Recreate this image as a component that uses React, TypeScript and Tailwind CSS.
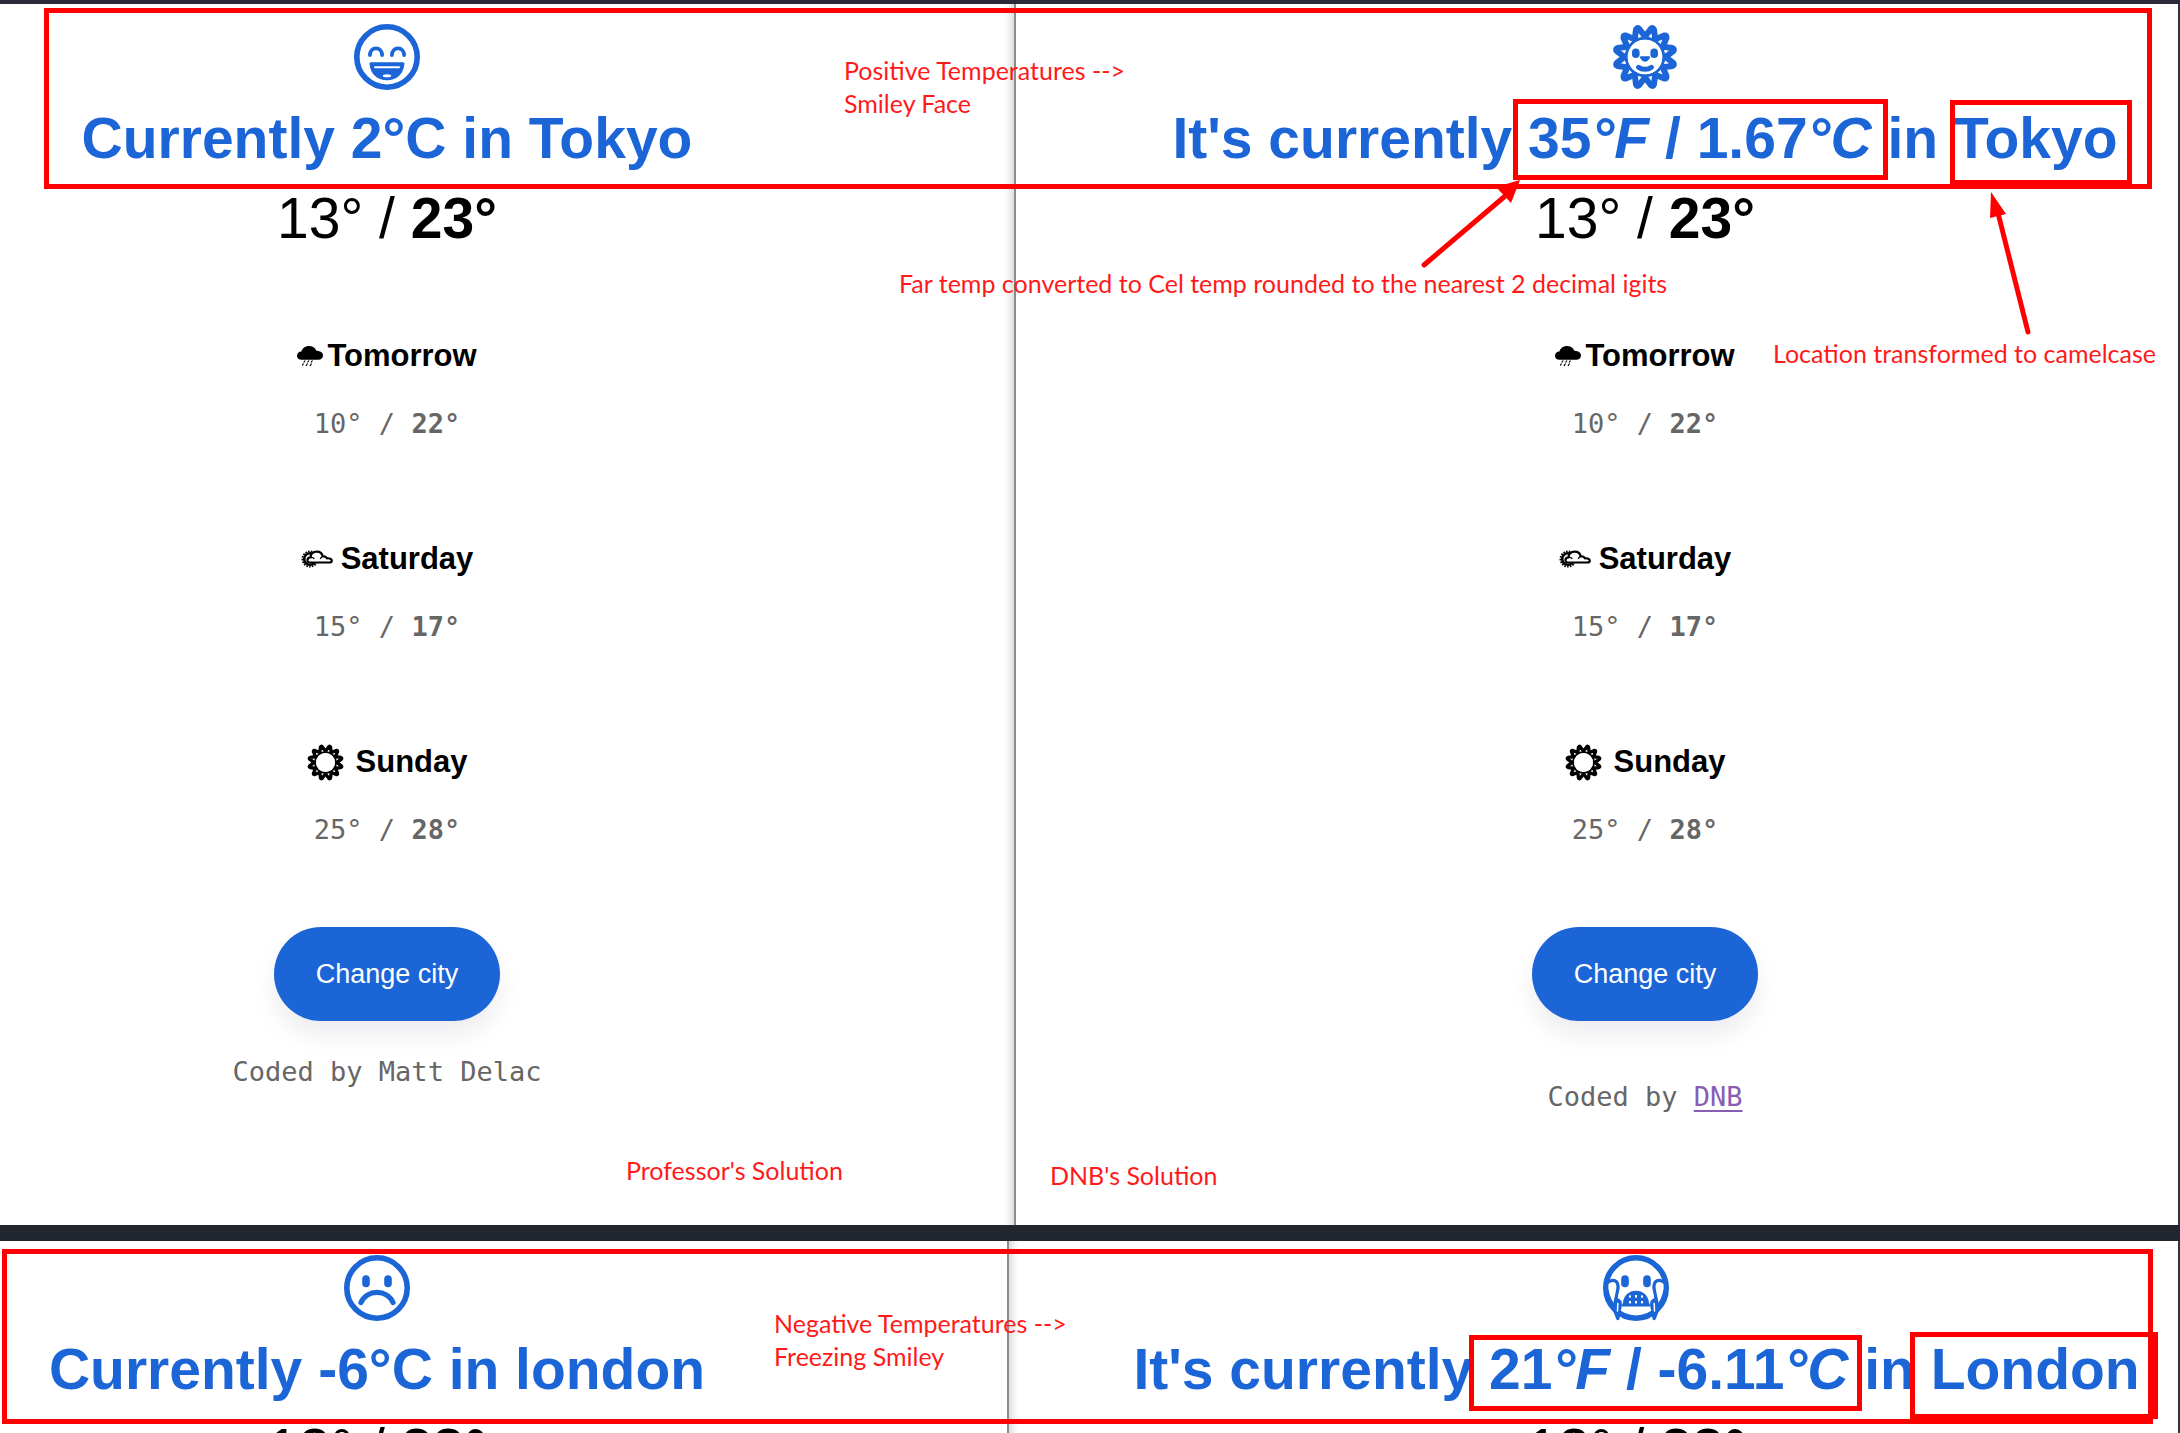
import React from "react";

type Temperatures = { low: number; high: number };

function HappyFace() {
  return (
    <svg viewBox="0 0 66 66" className="size-[66px]" fill="none" stroke="currentColor" strokeLinecap="round">
      <circle cx="33" cy="33" r="30.2" strokeWidth="5.6" />
      <path d="M15.9 31C16 27 18.6 24.4 22 24.4S28 27 28.1 31M37.9 31C38 27 40.6 24.4 44 24.4S50 27 50.1 31" strokeWidth="3.8" />
      <path d="M17 38.3h32c1.2 0 1.5.8 1.4 1.8C49.6 50 43 56.3 33 56.3S16.4 50 15.6 40.1c-.1-1 .2-1.8 1.4-1.8z" fill="currentColor" stroke="none" />
      <path d="M21 43.3h24" stroke="#fff" strokeWidth="2" />
      <ellipse cx="33" cy="51.8" rx="4.2" ry="1.5" fill="#fff" stroke="none" />
    </svg>
  );
}

function Eyes() {
  return (
    <g fill="currentColor" stroke="none">
      <rect x="18.2" y="20.3" width="7.6" height="12" rx="3.8" />
      <rect x="40.2" y="20.3" width="7.6" height="12" rx="3.8" />
    </g>
  );
}

function SadFace() {
  return (
    <svg viewBox="0 0 66 66" className="size-[66px]" fill="none" stroke="currentColor" strokeLinecap="round">
      <circle cx="33" cy="33" r="30.2" strokeWidth="5.6" />
      <Eyes />
      <path d="M17 47.5C23 34 43 34 49 47.5" strokeWidth="5.2" />
    </svg>
  );
}

function Hand() {
  return (
    <>
      <path d="M5.5 27C11 23.500 15.500 26 15 33L12 47 8 50Q5 40 5.500 27Z" fill="#fff" stroke="none" />
      <path d="M4 28C10 23 15.500 25.500 15 33L12.500 46" strokeWidth="3.200" />
      <path d="M3.500 36Q5.500 46 11 52" strokeWidth="4.500" />
      <path d="M11.500 43.500C17 42.500 19.500 46 18.800 50.500L16.500 64Q15 66.500 13.200 64L9 53Z" fill="currentColor" stroke="none" />
      <path d="M14.800 48.500L14.500 56" stroke="#fff" strokeWidth="1.500" />
    </>
  );
}

function FreezingFace() {
  return (
    <svg viewBox="0 0 66 66" className="size-[66px]" fill="none" stroke="currentColor" strokeLinecap="round" strokeLinejoin="round">
      <circle cx="33" cy="33" r="30.2" strokeWidth="5.6" />
      <Eyes />
      <Hand />
      <g transform="matrix(-1 0 0 1 66 0)">
        <Hand />
      </g>
      <path d="M18 51.500L20 48C20.500 40.500 26 35.800 33 35.800S45.500 40.500 46 48L48 51.500Z" fill="currentColor" stroke="none" />
      <g fill="#fff" stroke="none">
        <rect x="26" y="40.400" width="2" height="2.200" />
        <rect x="32" y="40" width="2" height="2.600" />
        <rect x="38" y="40.400" width="2" height="2.200" />
        <rect x="26" y="46" width="2" height="2.400" />
        <rect x="32" y="46" width="2" height="2.400" />
        <rect x="38" y="46" width="2" height="2.400" />
      </g>
    </svg>
  );
}

const PETAL_ANGLES = [15, 45, 75, 105, 135, 165, 195, 225, 255, 285, 315, 345];

function SunPetals() {
  return (
    <g strokeWidth="6" strokeLinejoin="round" strokeLinecap="round">
      {PETAL_ANGLES.map((angle) => (
        <path key={angle} d="M27.8 13L31.400 4.200Q33 2 34.600 4.200L38.200 13" transform={`rotate(${angle} 33 33)`} />
      ))}
    </g>
  );
}

function SunFace() {
  return (
    <svg viewBox="0 0 66 66" className="size-[66px]" fill="none" stroke="currentColor" strokeLinecap="round">
      <SunPetals />
      <circle cx="33" cy="33" r="18.800" strokeWidth="3" />
      <circle cx="33" cy="33" r="17.300" fill="#fff" stroke="none" />
      <rect x="20" y="24.5" width="7.6" height="9.6" rx="3.8" fill="currentColor" stroke="none" />
      <rect x="38.400" y="24.5" width="7.6" height="9.6" rx="3.8" fill="currentColor" stroke="none" />
      <path d="M29 32.3h8c1.2 0 1.3 1 .8 1.8C36.5 36.5 35 37.7 33 37.7S29.5 36.5 28.2 34.1c-.5-.8-.4-1.8.8-1.8z" fill="currentColor" stroke="none" />
      <path d="M26.5 43.3C30 46 36 46 39.5 43.3" strokeWidth="5" />
    </svg>
  );
}

function SunIcon() {
  return (
    <svg viewBox="0 0 66 66" className="size-[37px]" fill="none" stroke="currentColor">
      <SunPetals />
      <circle cx="33" cy="33" r="18.5" strokeWidth="3.5" />
      <circle cx="33" cy="33" r="17" fill="#fff" stroke="none" />
    </svg>
  );
}

function RainIcon() {
  return (
    <svg viewBox="0 0 26 21" className="h-[21px] w-[26px]" fill="currentColor">
      <path d="M4.500 13.800C1.800 13.800 0 12.200 0 9.800S1.800 5.700 4.400 5.600C5.300 2.100 8.400 0 12 0c3.500 0 6.300 1.700 7.300 4.700 3.900.1 6.700 1.900 6.700 4.800 0 2.600-1.800 4.300-4.800 4.300z" />
      <path d="M8.200 14.500l-1.500 2M12 14.500l-1.500 2M15.500 14.500l-1.500 2M6.500 17.500l-1.200 2M10.500 17.500l-1.500 2.500M14.500 17.500l-1.500 2.500" stroke="currentColor" strokeWidth="1.200" />
    </svg>
  );
}

function PartlyCloudyIcon() {
  return (
    <svg viewBox="0 0 32 18" className="h-[18px] w-8" fill="none" stroke="currentColor" strokeLinejoin="round">
      <circle cx="9" cy="9" r="7.600" strokeWidth="1.800" strokeDasharray="1.600 1.200" />
      <circle cx="9" cy="9" r="5.800" strokeWidth="2.600" />
      <path d="M8.500 12.500C5.700 12.500 5.500 7.400 9.600 7.400 9.400 4 12 1.600 15.600 1.600c3.400 0 5.700 2 6 4.900 1.800-.5 3.600.2 4.300 1.800 2.600-.3 4.900.5 4.900 2.400 0 1.300-1 1.800-2.600 1.800z" fill="#fff" strokeWidth="2.200" />
      <path d="M9.600 7.400c1.700-.3 3 .2 3.700 1.600M21.600 6.500c-1.300.4-2 1.200-2.200 2.500" strokeWidth="1.300" />
    </svg>
  );
}

function Range({ low, high }: Temperatures) {
  return (
    <>
      {low}° / <strong className="font-bold">{high}°</strong>
    </>
  );
}

function Today({ icon, children }: { icon: React.ReactNode; children: React.ReactNode }) {
  return (
    <header className="flex flex-col items-center gap-4">
      <div className="text-[#1b65d7]">{icon}</div>
      <h1 className="text-[57px]/[64px] font-bold whitespace-nowrap text-[#1b65d7]">{children}</h1>
      <p className="text-[57px]/[64px] whitespace-nowrap text-black">
        <Range low={13} high={23} />
      </p>
    </header>
  );
}

function Day({ icon, name, gap, low, high }: Temperatures & { icon: React.ReactNode; name: string; gap: string }) {
  return (
    <li className="flex flex-col items-center gap-7">
      <h2 className={`flex h-10 items-center text-[31px]/[40px] font-bold text-black ${gap}`}>
        {icon}
        {name}
      </h2>
      <p className="font-['DejaVu_Sans_Mono',monospace] text-[27px]/[40px] whitespace-pre text-[#666]">
        <Range low={low} high={high} />
      </p>
    </li>
  );
}

function Forecast() {
  return (
    <ul className="mt-[86px] flex flex-col gap-[95px]">
      <Day icon={<RainIcon />} name="Tomorrow" gap="gap-1" low={10} high={22} />
      <Day icon={<PartlyCloudyIcon />} name="Saturday" gap="gap-2" low={15} high={17} />
      <Day icon={<SunIcon />} name="Sunday" gap="gap-3" low={25} high={28} />
    </ul>
  );
}

function ChangeCity() {
  return (
    <button
      type="button"
      className="mt-[77px] h-[94px] rounded-full bg-[#1b65d7] px-[42px] text-[27px]/[40px] text-white shadow-[0_14px_24px_rgba(20,20,70,0.08)]"
    >
      Change city
    </button>
  );
}

function Frame({ place }: { place: string }) {
  return <div className={`pointer-events-none absolute border-[5px] border-[#ff0000] ${place}`} />;
}

function Note({ place, children }: { place: string; children: React.ReactNode }) {
  return (
    <p className={`absolute font-['Lato',sans-serif] text-[25px]/[33px] whitespace-nowrap text-[#ff1a1a] ${place}`}>{children}</p>
  );
}

function Arrows() {
  return (
    <svg viewBox="0 0 640 170" className="pointer-events-none absolute top-[172px] left-[1410px] h-[170px] w-[640px]" stroke="#f00" strokeWidth="5" strokeLinecap="round" fill="#f00">
      <path d="M14 89L94 21M618 156L588 37" />
      <path d="M110 4L86 11L101 27ZM581 16L580 42L596 38Z" stroke="none" />
    </svg>
  );
}

export default function App() {
  return (
    <main className="flex h-screen flex-col overflow-hidden bg-white font-['Liberation_Sans',Arial,sans-serif]">
      <div className="h-1 shrink-0 bg-[#2b2a3d]" />
      <section className="relative grid shrink-0 grid-cols-[1016fr_1164fr]">
        <article className="flex flex-col items-center border-r-2 border-[#8c8c8c] pt-5 pr-[240px] shadow-[inset_-10px_0_10px_-8px_rgba(0,0,0,0.2)]">
          <Today icon={<HappyFace />}>Currently 2°C in Tokyo</Today>
          <Forecast />
          <ChangeCity />
          <p className="mt-[31px] font-['DejaVu_Sans_Mono',monospace] text-[27px]/[40px] text-[#666]">Coded by Matt Delac</p>
        </article>
        <article className="flex flex-col items-center border-r-2 border-[#2f3340] pt-5 pb-[108px] pl-[96px]">
          <Today icon={<SunFace />}>
            It's currently 35<i>°F</i> / 1.67<i>°C</i> in Tokyo
          </Today>
          <Forecast />
          <ChangeCity />
          <p className="mt-[56px] font-['DejaVu_Sans_Mono',monospace] text-[27px]/[40px] text-[#666]">
            Coded by{" "}
            <a href="#dnb" className="text-[#8a5db5] underline decoration-2 underline-offset-4">
              DNB
            </a>
          </p>
        </article>
        <Frame place="top-1 left-11 right-[28px] h-[181px]" />
        <Frame place="top-[95px] left-[1513px] h-[81px] w-[375px]" />
        <Frame place="top-24 left-[1950px] h-[85px] w-[182px]" />
        <Arrows />
        <Note place="top-[50px] left-[844px]">
          Positive Temperatures --&gt;
          <br />
          Smiley Face
        </Note>
        <Note place="top-[263px] left-[899px]">Far temp converted to Cel temp rounded to the nearest 2 decimal igits</Note>
        <Note place="top-[333px] left-[1773px]">Location transformed to camelcase</Note>
        <Note place="top-[1150px] left-[626px]">Professor's Solution</Note>
        <Note place="top-[1155px] left-[1050px]">DNB's Solution</Note>
      </section>
      <div className="h-4 shrink-0 bg-[#22262f]" />
      <section className="relative grid min-h-0 flex-1 grid-cols-[1007fr_1173fr] overflow-hidden">
        <article className="flex flex-col items-center pt-[14px] pr-[253px]">
          <Today icon={<SadFace />}>Currently -6°C in london</Today>
        </article>
        <article className="flex flex-col items-center border-r-2 border-l-2 border-r-[#2f3340] border-l-[#8c8c8c] pt-[14px] pl-[86px] shadow-[inset_10px_0_10px_-8px_rgba(0,0,0,0.2)]">
          <Today icon={<FreezingFace />}>
            It's currently 21<i>°F</i> / -6.11<i>°C</i> in London
          </Today>
        </article>
        <Frame place="top-2 left-[2px] right-[27px] h-[175px]" />
        <Frame place="top-[94px] left-[1469px] h-[76px] w-[393px]" />
        <Frame place="top-[91px] left-[1910px] h-[87px] w-[248px]" />
        <Note place="top-[66px] left-[774px]">
          Negative Temperatures --&gt;
          <br />
          Freezing Smiley
        </Note>
      </section>
    </main>
  );
}
